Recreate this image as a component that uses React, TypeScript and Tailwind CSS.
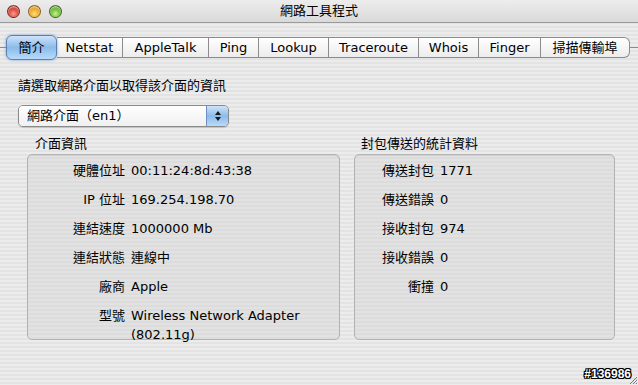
import React from "react";

const font = { fontFamily: '"DejaVu Sans", "Noto Sans CJK TC", sans-serif' };

const tabs = [
  { label: "簡介", w: "w-[51px]" },
  { label: "Netstat", w: "w-[66px]" },
  { label: "AppleTalk", w: "w-[86px]" },
  { label: "Ping", w: "w-[50px]" },
  { label: "Lookup", w: "w-[70px]" },
  { label: "Traceroute", w: "w-[90px]" },
  { label: "Whois", w: "w-[60px]" },
  { label: "Finger", w: "w-[62px]" },
  { label: "掃描傳輸埠", w: "w-[89px]" },
];

const info = [
  ["硬體位址", "00:11:24:8d:43:38"],
  ["IP 位址", "169.254.198.70"],
  ["連結速度", "1000000 Mb"],
  ["連結狀態", "連線中"],
  ["廠商", "Apple"],
  ["型號", "Wireless Network Adapter (802.11g)"],
];

const stats = [
  ["傳送封包", "1771"],
  ["傳送錯誤", "0"],
  ["接收封包", "974"],
  ["接收錯誤", "0"],
  ["衝撞", "0"],
];

function Light({ color }: { color: string }) {
  return (
    <div
      className={`h-[13px] w-[13px] rounded-full border border-black/40 ${color} shadow-[inset_0_1px_2px_rgba(255,255,255,0.8)]`}
    />
  );
}

function Rows({ rows, labelW }: { rows: string[][]; labelW: string }) {
  return (
    <div className="flex flex-col gap-[10px] pt-[6px] text-[13px] leading-[19px] text-black">
      {rows.map(([k, v]) => (
        <div key={k} className="flex">
          <div className={`${labelW} shrink-0 text-right`}>{k}</div>
          <div className="w-[195px] pl-[6px]">{v}</div>
        </div>
      ))}
    </div>
  );
}

export default function App() {
  return (
    <div
      className="relative h-[385px] w-[638px] overflow-hidden bg-[repeating-linear-gradient(to_bottom,#ececec_0px,#ececec_2px,#e3e3e3_2px,#e3e3e3_4px)] text-black"
      style={font}
    >
      {/* title bar */}
      <div className="relative flex h-[23px] items-center border-b border-[#9a9a9a] bg-gradient-to-b from-[#ededed] to-[#d9d9d9]">
        <div className="flex gap-[8px] pl-[7px]">
          <Light color="bg-[radial-gradient(circle_at_50%_70%,#ff9b8e,#d0352b_60%,#a01810)]" />
          <Light color="bg-[radial-gradient(circle_at_50%_70%,#ffe07a,#e79b1a_60%,#b86e05)]" />
          <Light color="bg-[radial-gradient(circle_at_50%_70%,#c8f58a,#5fae2a_60%,#357a12)]" />
        </div>
        <div className="absolute inset-x-0 text-center text-[13px] leading-[20px]">
          網路工具程式
        </div>
      </div>

      {/* tabs */}
      <div className="mt-[14px] flex items-center">
        <div className="h-px w-[6px] bg-[#8c8c8c]" />
        <div className="flex h-[21px]">
          {tabs.map((t, i) => {
            const sel = i === 0;
            const last = i === tabs.length - 1;
            return (
              <div
                key={t.label}
                className={`${t.w} flex items-center justify-center text-[13px] leading-[19px] ${
                  sel
                    ? "relative z-10 -my-[2px] rounded-[6px] border border-[#5b7fb0] bg-gradient-to-b from-[#cfe3f8] via-[#8bbbea] to-[#b7dbfb] shadow-[0_0_3px_rgba(80,130,200,0.7)]"
                    : `border-y border-[#8c8c8c] bg-gradient-to-b from-white to-[#ececec] ${
                        last ? "rounded-r-[6px] border-r" : "border-r"
                      }`
                }`}
              >
                {t.label}
              </div>
            );
          })}
        </div>
        <div className="h-px flex-1 bg-[#8c8c8c]" />
      </div>

      <div className="px-[18px] pt-[19px]">
        <div className="text-[13px] leading-[18px]">請選取網路介面以取得該介面的資訊</div>

        {/* popup */}
        <div className="mt-[10px] flex h-[22px] w-[211px] overflow-hidden rounded-[5px] border border-[#8a8a8a] shadow-[0_1px_1px_rgba(0,0,0,0.15)]">
          <div className="flex flex-1 items-center bg-gradient-to-b from-white to-[#f0f0f0] pl-[8px] text-[13px] leading-[18px]">
            網路介面（en1）
          </div>
          <div className="flex w-[22px] flex-col items-center justify-center gap-[2px] border-l border-[#6f8fbf] bg-gradient-to-b from-[#cfe3f8] via-[#8bbbea] to-[#b7dbfb]">
            <div className="h-0 w-0 border-x-[3px] border-b-[4px] border-x-transparent border-b-[#1a1a1a]" />
            <div className="h-0 w-0 border-x-[3px] border-t-[4px] border-x-transparent border-t-[#1a1a1a]" />
          </div>
        </div>
      </div>

      {/* groups */}
      <div className="mt-[9px] flex gap-[14px] pl-[27px]">
        <div className="w-[313px]">
          <div className="pl-[8px] text-[13px] leading-[16px]">介面資訊</div>
          <div className="mt-[2px] h-[186px] rounded-[5px] border border-[#b3b3b3] bg-[repeating-linear-gradient(to_bottom,#e2e2e2_0px,#e2e2e2_2px,#dcdcdc_2px,#dcdcdc_4px)] shadow-[inset_0_1px_1px_rgba(0,0,0,0.08)]">
            <Rows rows={info} labelW="w-[97px]" />
          </div>
        </div>
        <div className="w-[261px]">
          <div className="pl-[7px] text-[13px] leading-[16px]">封包傳送的統計資料</div>
          <div className="mt-[2px] h-[186px] rounded-[5px] border border-[#b3b3b3] bg-[repeating-linear-gradient(to_bottom,#e2e2e2_0px,#e2e2e2_2px,#dcdcdc_2px,#dcdcdc_4px)] shadow-[inset_0_1px_1px_rgba(0,0,0,0.08)]">
            <Rows rows={stats} labelW="w-[79px]" />
          </div>
        </div>
      </div>

      {/* watermark */}
      <div
        className="absolute bottom-[4px] right-[7px] text-[12px] font-bold leading-[14px] text-white [text-shadow:1px_0_0_#000,-1px_0_0_#000,0_1px_0_#000,0_-1px_0_#000,1px_1px_0_#000,-1px_-1px_0_#000,1px_-1px_0_#000,-1px_1px_0_#000]"
        style={{ fontFamily: '"Liberation Sans", sans-serif' }}
      >
        #136986
      </div>
      <svg className="absolute bottom-0 right-0" width="10" height="10" viewBox="0 0 10 10">
        <path d="M9 2 L2 9 M9 5 L5 9 M9 8 L8 9" stroke="#7a7a7a" strokeWidth="1" />
      </svg>
    </div>
  );
}
